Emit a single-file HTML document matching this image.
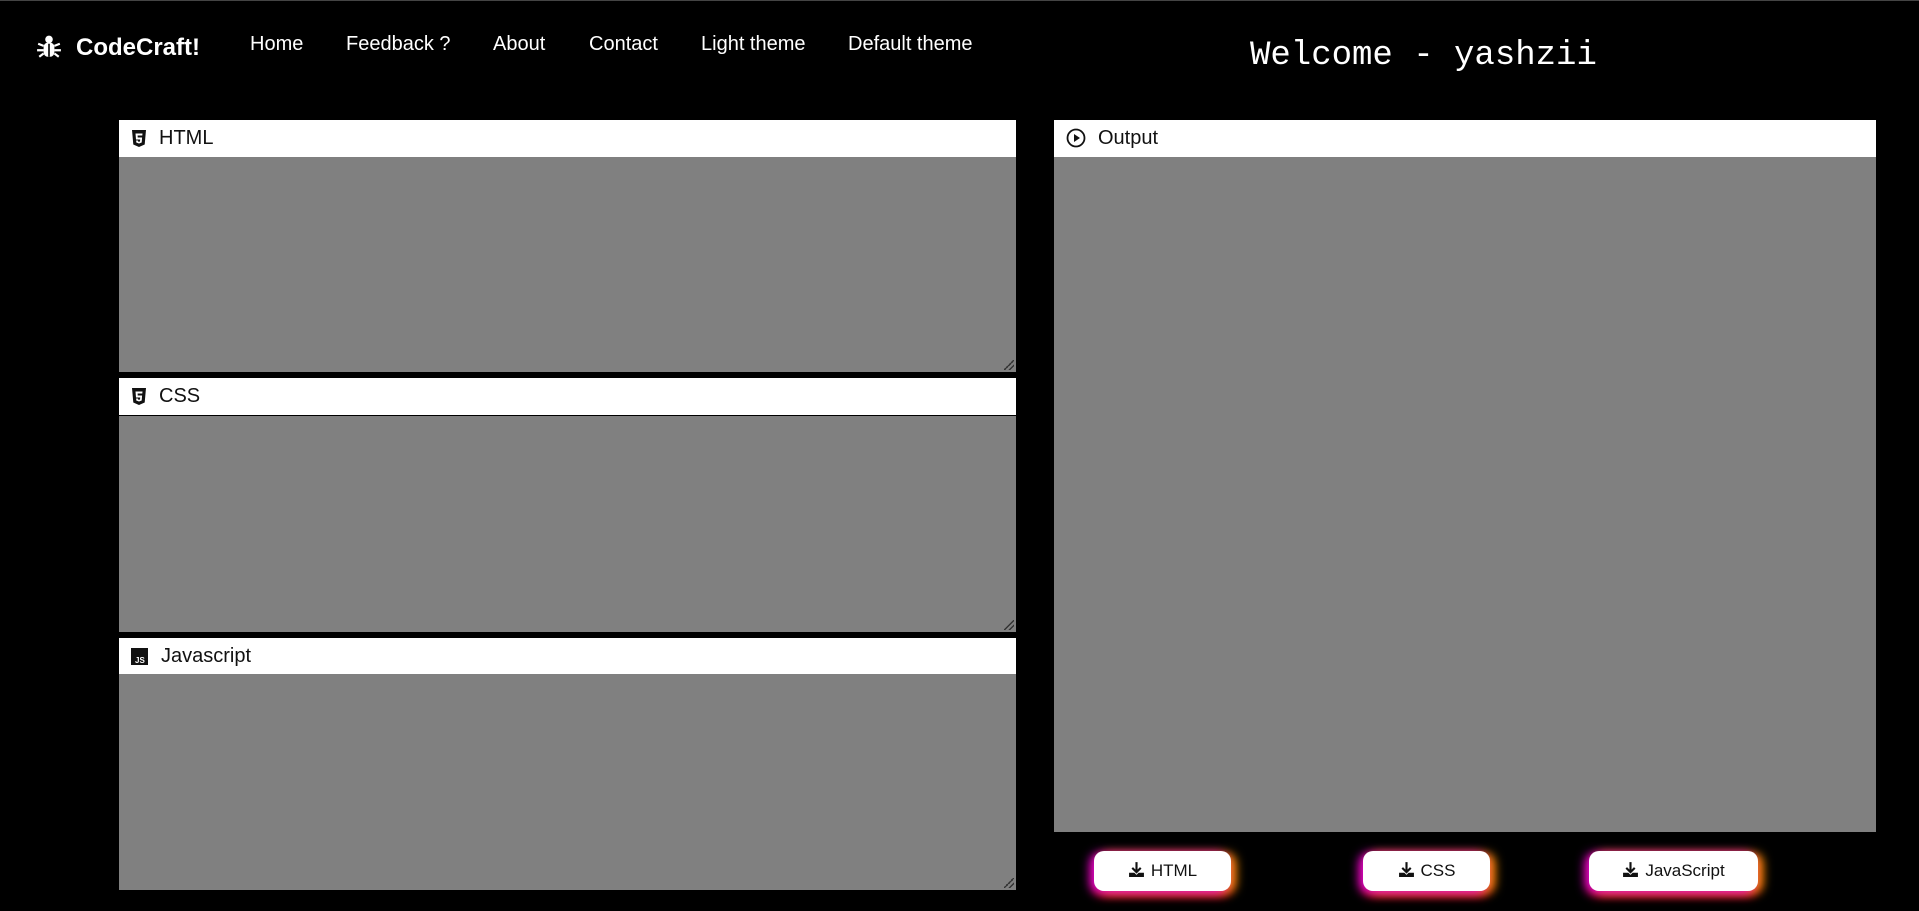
<!DOCTYPE html>
<html><head><meta charset="utf-8"><style>
*{margin:0;padding:0;box-sizing:border-box}
body{width:1919px;height:911px;background:#000;position:relative;overflow:hidden;font-family:"Liberation Sans",Arial,sans-serif;color:#fff}
.topline{position:absolute;top:0;left:0;width:100%;height:1px;background:#444}
.a{position:absolute}
.nav{font-size:20px;top:33px}
.logo{left:76px;top:34px;font-size:24px;font-weight:bold}
.welcome{left:1250px;top:37px;font-family:"Liberation Mono",monospace;font-size:34px}
.ph{position:absolute;background:#fff;color:#111;font-size:20px;height:37px;line-height:37px;padding-left:40px}
.pb{position:absolute;background:#808080}
.ic{position:absolute;left:12px;top:10px}
.grip{position:absolute;right:2px;bottom:2px;width:10px;height:10px;background:linear-gradient(135deg,transparent 45%,#333 45%,#333 55%,transparent 55%,transparent 72%,#333 72%,#333 82%,transparent 82%)}
.btn{position:absolute;top:851px;height:40px;background:#fff;color:#111;border-radius:10px;font-size:17px;line-height:40px;text-align:center;box-shadow:-4px 2px 10px #d0d,5px 2px 10px #f90,0 5px 10px #d00}
.btn svg{vertical-align:-2px;margin-right:6px}
</style></head><body>
<div class="topline"></div>
<svg class="a" style="left:36px;top:34px" width="26" height="26" viewBox="0 0 24 24" fill="#fff"><circle cx="12" cy="5" r="3.5"/><rect x="7" y="8" width="10" height="13" rx="4"/><path d="M2 9l5 2M22 9l-5 2M1 15h6M23 15h-6M3 21l4-3M21 21l-4-3" stroke="#fff" stroke-width="2"/><path d="M12 9v12" stroke="#000" stroke-width="1.5"/></svg>
<div class="a logo">CodeCraft!</div>
<div class="a nav" style="left:250px">Home</div>
<div class="a nav" style="left:346px">Feedback ?</div>
<div class="a nav" style="left:493px">About</div>
<div class="a nav" style="left:589px">Contact</div>
<div class="a nav" style="left:701px">Light theme</div>
<div class="a nav" style="left:848px">Default theme</div>
<div class="a welcome">Welcome - yashzii</div>

<div class="ph" style="left:119px;top:120px;width:897px"><svg class="ic" width="16" height="17" viewBox="0 0 16 17"><path d="M1 0h14l-1.3 14.5L8 17l-5.7-2.5z" fill="#111"/><path d="M4.5 3.5h7l-.2 2H6.6l.1 2h4.4l-.4 5L8 13.5l-2.7-1-.2-2h1.8l.1 1 1 .3 1-.3.2-2H5z" fill="#fff"/></svg>HTML</div>
<div class="pb" style="left:119px;top:157px;width:897px;height:215px"><div class="grip"></div></div>
<div class="ph" style="left:119px;top:378px;width:897px"><svg class="ic" width="16" height="17" viewBox="0 0 16 17"><path d="M1 0h14l-1.3 14.5L8 17l-5.7-2.5z" fill="#111"/><path d="M4.5 3.5h7l-.2 2H6.6l.1 2h4.4l-.4 5L8 13.5l-2.7-1-.2-2h1.8l.1 1 1 .3 1-.3.2-2H5z" fill="#fff"/></svg>CSS</div>
<div class="pb" style="left:119px;top:416px;width:897px;height:216px"><div class="grip"></div></div>
<div class="ph" style="left:119px;top:638px;width:897px;padding-left:42px"><svg class="ic" style="top:10px" width="17" height="17" viewBox="0 0 17 17"><rect width="17" height="17" fill="#111"/><text x="4" y="15" font-size="8" font-weight="bold" fill="#fff" font-family="Liberation Sans">JS</text></svg>Javascript</div>
<div class="pb" style="left:119px;top:674px;width:897px;height:216px"><div class="grip"></div></div>

<div class="ph" style="left:1054px;top:120px;width:822px;padding-left:44px"><svg class="ic" style="left:12px;top:8px" width="20" height="20" viewBox="0 0 20 20"><circle cx="10" cy="10" r="8.5" fill="none" stroke="#111" stroke-width="1.8"/><path d="M8 6v8l6-4z" fill="#111"/></svg>Output</div>
<div class="pb" style="left:1054px;top:157px;width:822px;height:675px"></div>

<div class="btn" style="left:1094px;width:137px"><svg width="17" height="17" viewBox="0 0 16 16"><path d="M8 1v9M4 6.5l4 4 4-4" stroke="#111" stroke-width="2" fill="none"/><path d="M1 11h5l2 2 2-2h5v4H1z" fill="#111"/></svg>HTML</div>
<div class="btn" style="left:1363px;width:127px"><svg width="17" height="17" viewBox="0 0 16 16"><path d="M8 1v9M4 6.5l4 4 4-4" stroke="#111" stroke-width="2" fill="none"/><path d="M1 11h5l2 2 2-2h5v4H1z" fill="#111"/></svg>CSS</div>
<div class="btn" style="left:1589px;width:169px"><svg width="17" height="17" viewBox="0 0 16 16"><path d="M8 1v9M4 6.5l4 4 4-4" stroke="#111" stroke-width="2" fill="none"/><path d="M1 11h5l2 2 2-2h5v4H1z" fill="#111"/></svg>JavaScript</div>
</body></html>
